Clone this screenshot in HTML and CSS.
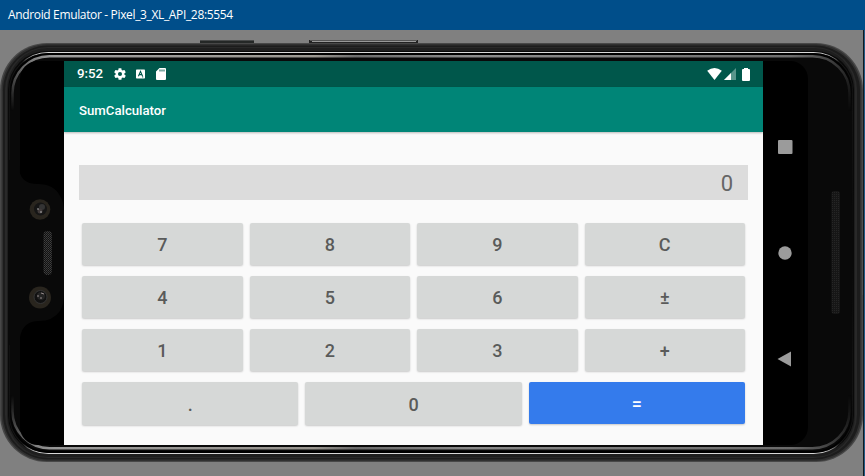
FILE: index.html
```html
<!DOCTYPE html>
<html lang="en">
<head>
<meta charset="utf-8">
<title>Android Emulator</title>
<link rel="stylesheet" href="styles.css">
</head>
<body>
<header class="titlebar"><span>Android Emulator - Pixel_3_XL_API_28:5554</span></header>
<main class="device">
  <svg class="shell" viewBox="0 30 865 446" aria-hidden="true">
    <defs>
      <linearGradient id="shine" x1="0" x2="1" y1="0" y2="0">
        <stop offset="0" stop-color="#777"/><stop offset=".05" stop-color="#aaa"/><stop offset=".36" stop-color="#aaa69f"/><stop offset=".41" stop-color="#777"/><stop offset=".55" stop-color="#999"/><stop offset=".93" stop-color="#777"/><stop offset="1" stop-color="#333"/>
      </linearGradient>
      <linearGradient id="fade" x1="0" x2="0" y1="0" y2="1">
        <stop offset="0" stop-color="#fff"/><stop offset=".06" stop-color="#aaa"/><stop offset=".15" stop-color="#000"/><stop offset=".85" stop-color="#000"/><stop offset=".94" stop-color="#aaa"/><stop offset="1" stop-color="#fff"/>
      </linearGradient>
      <linearGradient id="edge" x1="0" x2="0" y1="0" y2="1">
        <stop offset="0" stop-color="#fff"/><stop offset=".007" stop-color="#fff"/><stop offset=".03" stop-color="#111"/><stop offset=".5" stop-color="#000"/><stop offset=".97" stop-color="#111"/><stop offset=".993" stop-color="#fff"/><stop offset="1" stop-color="#fff"/>
      </linearGradient>
      <mask id="ends" maskUnits="userSpaceOnUse" x="0" y="50" width="865" height="406"><rect y="50" width="865" height="406" fill="url(#fade)"/></mask>
      <mask id="tips" maskUnits="userSpaceOnUse" x="0" y="50" width="865" height="406"><rect y="50" width="865" height="406" fill="url(#edge)"/></mask>
      <pattern id="mesh" width="2" height="2" patternUnits="userSpaceOnUse"><rect width="2" height="2" fill="#111"/><rect width="1" height="1" fill="#404040"/><rect x="1" y="1" width="1" height="1" fill="#343434"/></pattern>
      <pattern id="mesh2" width="2" height="2" patternUnits="userSpaceOnUse"><rect width="2" height="2" fill="#161616"/><rect width="1" height="1" fill="#252525"/></pattern>
    </defs>
    <rect x="200" y="40" width="54" height="5" fill="#252827"/><path d="M200 40.500h54" stroke="#484a4a"/>
    <rect x="309" y="40" width="109" height="5" fill="#222"/><path d="M310 40.500h107" stroke="#555"/><path d="M312 41.500h104" stroke="#999"/>
    <rect x="0" y="43" width="863" height="419" rx="47" fill="#484848"/>
    <rect x="1.500" y="44" width="860" height="417" rx="46" fill="#303030"/>
    <rect x="3" y="45.500" width="857" height="414" rx="45" fill="#1c1c1c"/>
    <rect x="5" y="47" width="852" height="411" rx="43" fill="#292929"/>
    <rect x="7" y="48" width="848" height="409" rx="41" fill="#1e1e1e"/>
    <rect x="8" y="51" width="846" height="403" rx="39" fill="#090909"/>
    <g fill="none">
      <rect x="9.500" y="52.500" width="843" height="401" rx="39" stroke="#d8d8d8" stroke-width="1.200" mask="url(#tips)"/>
      <rect x="10.500" y="54" width="841" height="398" rx="38" stroke="#000" stroke-width="2" mask="url(#ends)"/>
      <rect x="12.500" y="56.300" width="837" height="392" rx="37" stroke="url(#shine)" stroke-width="2.500" mask="url(#ends)"/>
    </g>
    <rect x="20" y="61" width="788" height="384" rx="18" fill="#000"/>
    <path d="M8 160H19V166Q19 184 38 184Q54 184 60 196Q64 202 64 212V294Q64 304 60 311Q53 321 39 321Q23 321 20 337V345H8Z" fill="#090909"/>
    <g>
      <circle cx="40" cy="209.500" r="10.300" fill="#29251e"/><circle cx="40.500" cy="209" r="6.500" fill="#151515"/><circle cx="42" cy="207" r="3" fill="#343434"/><circle cx="40" cy="211" r="2.500" fill="#403a3a"/><path d="M37 209h2m1 3h2" stroke="#aaa"/>
      <circle cx="40" cy="297.500" r="11" fill="#29251e"/><circle cx="40.500" cy="297" r="6.500" fill="#111" stroke="#353535"/><circle cx="41" cy="296" r="4" fill="#242424"/><path d="M37 296h2m1 2h2m-1-5 3 1" stroke="#958b8b"/>
    </g>
    <rect x="43.500" y="231" width="8.500" height="44" rx="4" fill="url(#mesh)"/>
    <rect x="831.500" y="191" width="8.500" height="123" rx="3" fill="url(#mesh2)"/>
    <path d="M862.500 210V295" stroke="#555" opacity=".6"/>
    <path d="M863.500 30V476" stroke="#11191f"/><path d="M864.500 30V476" stroke="#215a85"/>
  </svg>
  <section class="screen">
    <div class="statusbar">
      <time>9:52</time>
      <svg class="gear" viewBox="0 0 24 24"><path fill-rule="evenodd" d="M19.400 13a7.800 7.800 0 0 0 0-2l2.100-1.600a.5.5 0 0 0 .1-.7l-2-3.400a.5.5 0 0 0-.6-.2l-2.500 1a7 7 0 0 0-1.700-1L14.400 2.400A.5.5 0 0 0 14 2h-4a.5.5 0 0 0-.5.4l-.4 2.700a7 7 0 0 0-1.700 1l-2.500-1a.5.5 0 0 0-.6.200l-2 3.400a.5.5 0 0 0 .1.700L4.600 11a8 8 0 0 0 0 2l-2.200 1.600a.5.5 0 0 0-.1.700l2 3.400c.1.200.4.300.6.200l2.500-1a7 7 0 0 0 1.700 1l.4 2.700c0 .2.200.4.500.4h4c.2 0 .4-.2.500-.4l.4-2.700a7 7 0 0 0 1.700-1l2.500 1c.2.100.5 0 .6-.2l2-3.400a.5.5 0 0 0-.1-.7zM12 15.500a3.500 3.500 0 1 1 0-7 3.500 3.500 0 0 1 0 7z"/></svg>
      <svg class="keyboard" viewBox="0 0 10 10"><rect width="10" height="10" rx=".8"/><path class="cut" d="M2.700 7.500 5 2l2.300 5.500M3.500 5.700h3M7 8.300h1"/></svg>
      <svg class="sd" viewBox="0 0 10 12"><path fill-rule="evenodd" d="M3.500 0H9q1 0 1 1v10q0 1-1 1H1q-1 0-1-1V3.500ZM3.500 1.500v2h1v-2ZM5.500 1.500v2h1v-2ZM7.500 1.500v2h1v-2Z"/></svg>
      <span class="spacer"></span>
      <svg class="wifi" viewBox="0 0 15 12"><path d="M.2 2.700Q7.500-2.500 14.800 2.700L7.500 12Z"/></svg>
      <svg class="signal" viewBox="0 0 12 12"><path class="dim" d="M12 0v12H0Z"/><path d="M7 5v7H0Z"/></svg>
      <svg class="battery" viewBox="0 0 8 13"><path d="M2 1V0h4v1h1q1 0 1 1v10q0 1-1 1H1q-1 0-1-1V2q0-1 1-1Z"/></svg>
    </div>
    <div class="appbar">SumCalculator</div>
    <div class="content">
      <output class="display">0</output>
      <div class="keys">
        <div class="row"><button>7</button><button>8</button><button>9</button><button>C</button></div>
        <div class="row"><button>4</button><button>5</button><button>6</button><button>±</button></div>
        <div class="row"><button>1</button><button>2</button><button>3</button><button>+</button></div>
        <div class="row last"><button>.</button><button>0</button><button class="equals">=</button></div>
      </div>
    </div>
  </section>
  <nav class="navbar">
    <svg viewBox="0 0 16 16"><rect x="1" y="1" width="14.500" height="14" rx="1"/></svg>
    <svg viewBox="0 0 16 16"><circle cx="8" cy="8" r="6.700"/></svg>
    <svg viewBox="0 0 16 16"><path d="M14 .5V15.500L.5 8Z"/></svg>
  </nav>
</main>
</body>
</html>
```
FILE: styles.css
```css
* { box-sizing: border-box; }
body { margin: 0; width: 865px; height: 476px; overflow: hidden; background: #808080; font-family: Roboto, sans-serif; }
.titlebar { height: 30px; padding-left: 8px; background: #004e8a; color: #fff; font: 12px/30px "Open Sans", sans-serif; white-space: nowrap; letter-spacing: -.35px; }
.device { position: relative; display: flex; height: 446px; padding: 31px 57px 31px 64px; }
.shell { position: absolute; inset: 0; width: 865px; height: 446px; }
.screen { position: relative; display: flex; flex-direction: column; width: 699px; height: 384px; background: #fafafa; }
.statusbar { display: flex; align-items: center; height: 26px; padding: 0 13px; background: #00574b; color: #fff; }
.statusbar svg { fill: #fff; }
.statusbar time { width: 36px; font-size: 13.3px; font-weight: 500; line-height: 28px; }
.gear { width: 14px; height: 14px; }
.keyboard { width: 9px; height: 10px; margin-left: 9px; }
.keyboard .cut { fill: none; stroke: #00574b; stroke-width: 1.2; }
.sd { width: 10px; height: 12px; margin-left: 11px; }
.spacer { flex: 1; }
.wifi { width: 15px; height: 12px; }
.signal { width: 12px; height: 12px; margin-left: 2px; }
.signal .dim { fill: #59958c; }
.battery { width: 8px; height: 13px; margin-left: 6px; }
.appbar { height: 45px; padding-left: 15px; background: #008577; color: #fff; font-size: 13.2px; font-weight: 500; line-height: 47px; box-shadow: 0 1px 2px #0004; }
.content { padding: 33px 15px 0; }
.display { display: block; height: 35px; padding-right: 15px; background: #dcdcdc; color: #666; font-size: 22px; line-height: 38px; text-align: right; }
.keys { display: flex; flex-direction: column; gap: 11px; padding: 23px 3px 0; }
.row { display: flex; gap: 7px; height: 42px; }
.last { height: 43px; }
.row button { flex: 1; min-width: 0; padding: 2px 0 0; border: 0; border-radius: 2px; background: #d6d8d7; color: #5a5b5a; font: 500 18px/40px Roboto, sans-serif; box-shadow: 0 1px 2px #0003; }
.row .equals { height: 42px; background: #347bec; color: #fff; }
.navbar { position: relative; display: flex; flex-direction: column; align-items: center; justify-content: space-between; width: 44px; padding: 78px 0; }
.navbar svg { width: 16px; height: 16px; fill: #9b9b9b; }
```
